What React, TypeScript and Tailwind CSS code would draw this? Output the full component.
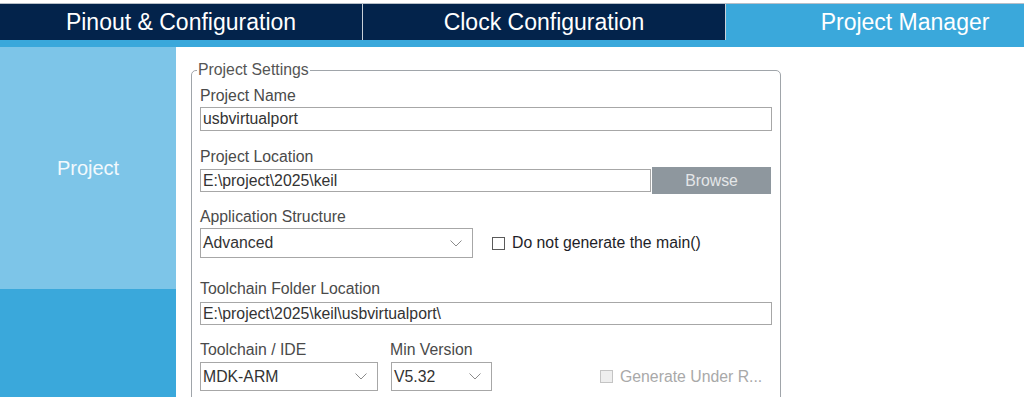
import React from "react";

const Chevron = () => (
  <svg width="12" height="7" viewBox="0 0 12 7" className="shrink-0">
    <polyline points="0.5,0.5 6,6 11.5,0.5" fill="none" stroke="#8c8c8c" strokeWidth="1" />
  </svg>
);

function Select({ value, width, height }: { value: string; width: string; height: string }) {
  return (
    <div className={`${width} ${height} border border-[#a7a7a7] bg-white flex items-center justify-between pl-[2px] pr-[10px]`}>
      <span className="text-[15.8px] text-[#333]">{value}</span>
      <Chevron />
    </div>
  );
}

function TextInput({ value, width, height }: { value: string; width: string; height: string }) {
  return (
    <div className={`${width} ${height} border border-[#a7a7a7] bg-white flex items-center pl-[2px]`}>
      <span className="text-[15.8px] text-[#333] whitespace-nowrap">{value}</span>
    </div>
  );
}

export default function App() {
  return (
    <div className="w-[1024px] h-[397px] bg-white overflow-hidden font-['Liberation_Sans',Arial,sans-serif]">
      <div className="h-[3px]" />
      <div className="flex h-[37px] border-t border-[#b7bfc8]">
        <div className="w-[363px] border-r border-[#c9d0d8] bg-[#03234b] flex items-center justify-center text-[23px] text-white">
          Pinout &amp; Configuration
        </div>
        <div className="w-[363px] border-r border-[#c9d0d8] bg-[#03234b] flex items-center justify-center text-[23px] text-white">
          Clock Configuration
        </div>
        <div className="flex-1 bg-[#3aa8db] flex items-center justify-center pl-[60px] text-[23px] text-white">
          Project Manager
        </div>
      </div>
      <div className="h-[7px] bg-[#3aa8db]" />

      <div className="flex h-[350px]">
        <div className="w-[176px] flex flex-col">
          <div className="h-[242px] bg-[#7dc5e8] flex items-center justify-center text-[20px] text-[#f2f9fd]">
            Project
          </div>
          <div className="flex-1 bg-[#3aa8db]" />
        </div>

        <div className="flex-1 pl-[15px] overflow-hidden">
          <fieldset className="w-[590px] mt-[15px] border border-[#a0a5aa] rounded-[5px] pl-[8px] pr-[8px] pb-[30px]">
            <legend className="ml-[-3px] px-[1px] text-[15.8px] leading-[16px] text-[#555]">Project Settings</legend>

            <div className="mt-[9px] text-[15.8px] leading-[18px] text-[#4a4a4a]">Project Name</div>
            <div className="mt-[2px]">
              <TextInput value="usbvirtualport" width="w-[572px]" height="h-[24px]" />
            </div>

            <div className="mt-[17px] text-[15.8px] leading-[18px] text-[#4a4a4a]">Project Location</div>
            <div className="mt-[1px] flex items-center h-[27px] gap-[1px]">
              <TextInput value="E:\project\2025\keil" width="w-[451px]" height="h-[23px]" />
              <div className="w-[119px] h-[27px] bg-[#8e979e] flex items-center justify-center text-[15.8px] text-[#e4e6e8]">
                Browse
              </div>
            </div>

            <div className="mt-[14px] text-[15.8px] leading-[18px] text-[#4a4a4a]">Application Structure</div>
            <div className="mt-[2px] flex items-center">
              <Select value="Advanced" width="w-[273px]" height="h-[30px]" />
              <div className="ml-[19px] w-[13px] h-[13px] border border-[#5a5a5a] bg-white" />
              <span className="ml-[7px] text-[15.8px] text-[#1e1e28]">Do not generate the main()</span>
            </div>

            <div className="mt-[22px] text-[15.8px] leading-[18px] text-[#4a4a4a]">Toolchain Folder Location</div>
            <div className="mt-[4px]">
              <TextInput value="E:\project\2025\keil\usbvirtualport\" width="w-[572px]" height="h-[23px]" />
            </div>

            <div className="mt-[16px] flex items-end">
              <div className="flex flex-col">
                <div className="text-[15.8px] leading-[18px] text-[#4a4a4a]">Toolchain / IDE</div>
                <div className="mt-[3px]">
                  <Select value="MDK-ARM" width="w-[178px]" height="h-[29px]" />
                </div>
              </div>
              <div className="ml-[13px] flex flex-col">
                <div className="text-[15.8px] leading-[18px] text-[#4a4a4a] ml-[-1px]">Min Version</div>
                <div className="mt-[3px]">
                  <Select value="V5.32" width="w-[101px]" height="h-[29px]" />
                </div>
              </div>
              <div className="ml-[108px] h-[29px] flex items-center">
                <div className="w-[13px] h-[13px] border border-[#c4c4c4] bg-[#eeeeee]" />
                <span className="ml-[7px] text-[15.8px] text-[#a9a9a9] whitespace-nowrap">Generate Under R...</span>
              </div>
            </div>
          </fieldset>
        </div>
      </div>
    </div>
  );
}
